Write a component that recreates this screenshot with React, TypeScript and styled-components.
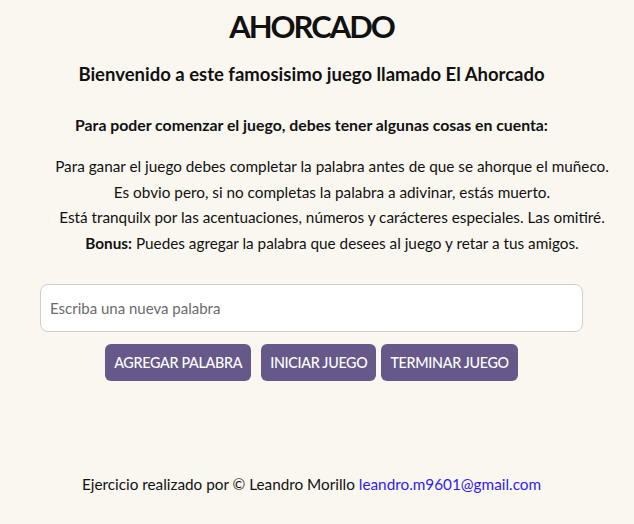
import React from "react";
import styled, { createGlobalStyle } from "styled-components";

const Global = createGlobalStyle`
  html, body { margin: 0; padding: 0; background: #faf7f0; }
  body { font-family: Lato, "Noto Sans", sans-serif; color: #111; }
`;

const Page = styled.div`
  display: flex;
  flex-direction: column;
  align-items: center;
  padding: 0 11px 0 0;
  min-height: 524px;
  box-sizing: border-box;
`;

const Title = styled.h1`
  margin: 8px 0 0;
  font-size: 31px;
  font-weight: 700;
  line-height: 36px;
  letter-spacing: -2px;
`;

const Subtitle = styled.h3`
  margin: 18px 0 0;
  font-size: 18.5px;
  font-weight: 700;
  line-height: 24px;
`;

const Heading = styled.h4`
  margin: 29px 0 0;
  font-size: 15.8px;
  font-weight: 700;
  line-height: 20px;
`;

const Rules = styled.div`
  margin: 19px 0 0 41px;
  display: flex;
  flex-direction: column;
  align-items: center;
  font-size: 15.3px;
  line-height: 25.5px;
  text-align: center;
`;

const Strong = styled.b`
  font-weight: 700;
`;

const Input = styled.input`
  margin-top: 28px;
  width: 543px;
  height: 48px;
  box-sizing: border-box;
  border: 1px solid #cfcfcf;
  border-radius: 8px;
  background: #fff;
  padding: 0 9px;
  font-family: Lato, "Noto Sans", sans-serif;
  font-size: 15px;
  color: #333;
  outline: none;
  &::placeholder { color: #6b6b6b; }
`;

const Buttons = styled.div`
  margin-top: 12px;
  display: flex;
  gap: 5px;
`;

const Button = styled.button<{ $spaced?: boolean }>`
  height: 37px;
  padding: 0 9px;
  margin-right: ${(p) => (p.$spaced ? "5px" : "0")};
  border: none;
  border-radius: 6px;
  background: #66598a;
  color: #fff;
  font-family: Lato, "Noto Sans", sans-serif;
  font-size: 14.3px;
  font-weight: 500;
  letter-spacing: -0.3px;
`;

const Footer = styled.footer`
  margin-top: 93px;
  font-size: 15.3px;
  line-height: 20px;
`;

const Mail = styled.a`
  color: #2f1cf0;
  text-decoration: none;
`;

export default function App() {
  return (
    <>
      <Global />
      <Page>
        <Title>AHORCADO</Title>
        <Subtitle>Bienvenido a este famosisimo juego llamado El Ahorcado</Subtitle>
        <Heading>Para poder comenzar el juego, debes tener algunas cosas en cuenta:</Heading>
        <Rules>
          <span>Para ganar el juego debes completar la palabra antes de que se ahorque el muñeco.</span>
          <span>Es obvio pero, si no completas la palabra a adivinar, estás muerto.</span>
          <span>Está tranquilx por las acentuaciones, números y carácteres especiales. Las omitiré.</span>
          <span><Strong>Bonus:</Strong> Puedes agregar la palabra que desees al juego y retar a tus amigos.</span>
        </Rules>
        <Input placeholder="Escriba una nueva palabra" />
        <Buttons>
          <Button $spaced>AGREGAR PALABRA</Button>
          <Button>INICIAR JUEGO</Button>
          <Button>TERMINAR JUEGO</Button>
        </Buttons>
        <Footer>
          Ejercicio realizado por © Leandro Morillo <Mail href="#">leandro.m9601@gmail.com</Mail>
        </Footer>
      </Page>
    </>
  );
}
